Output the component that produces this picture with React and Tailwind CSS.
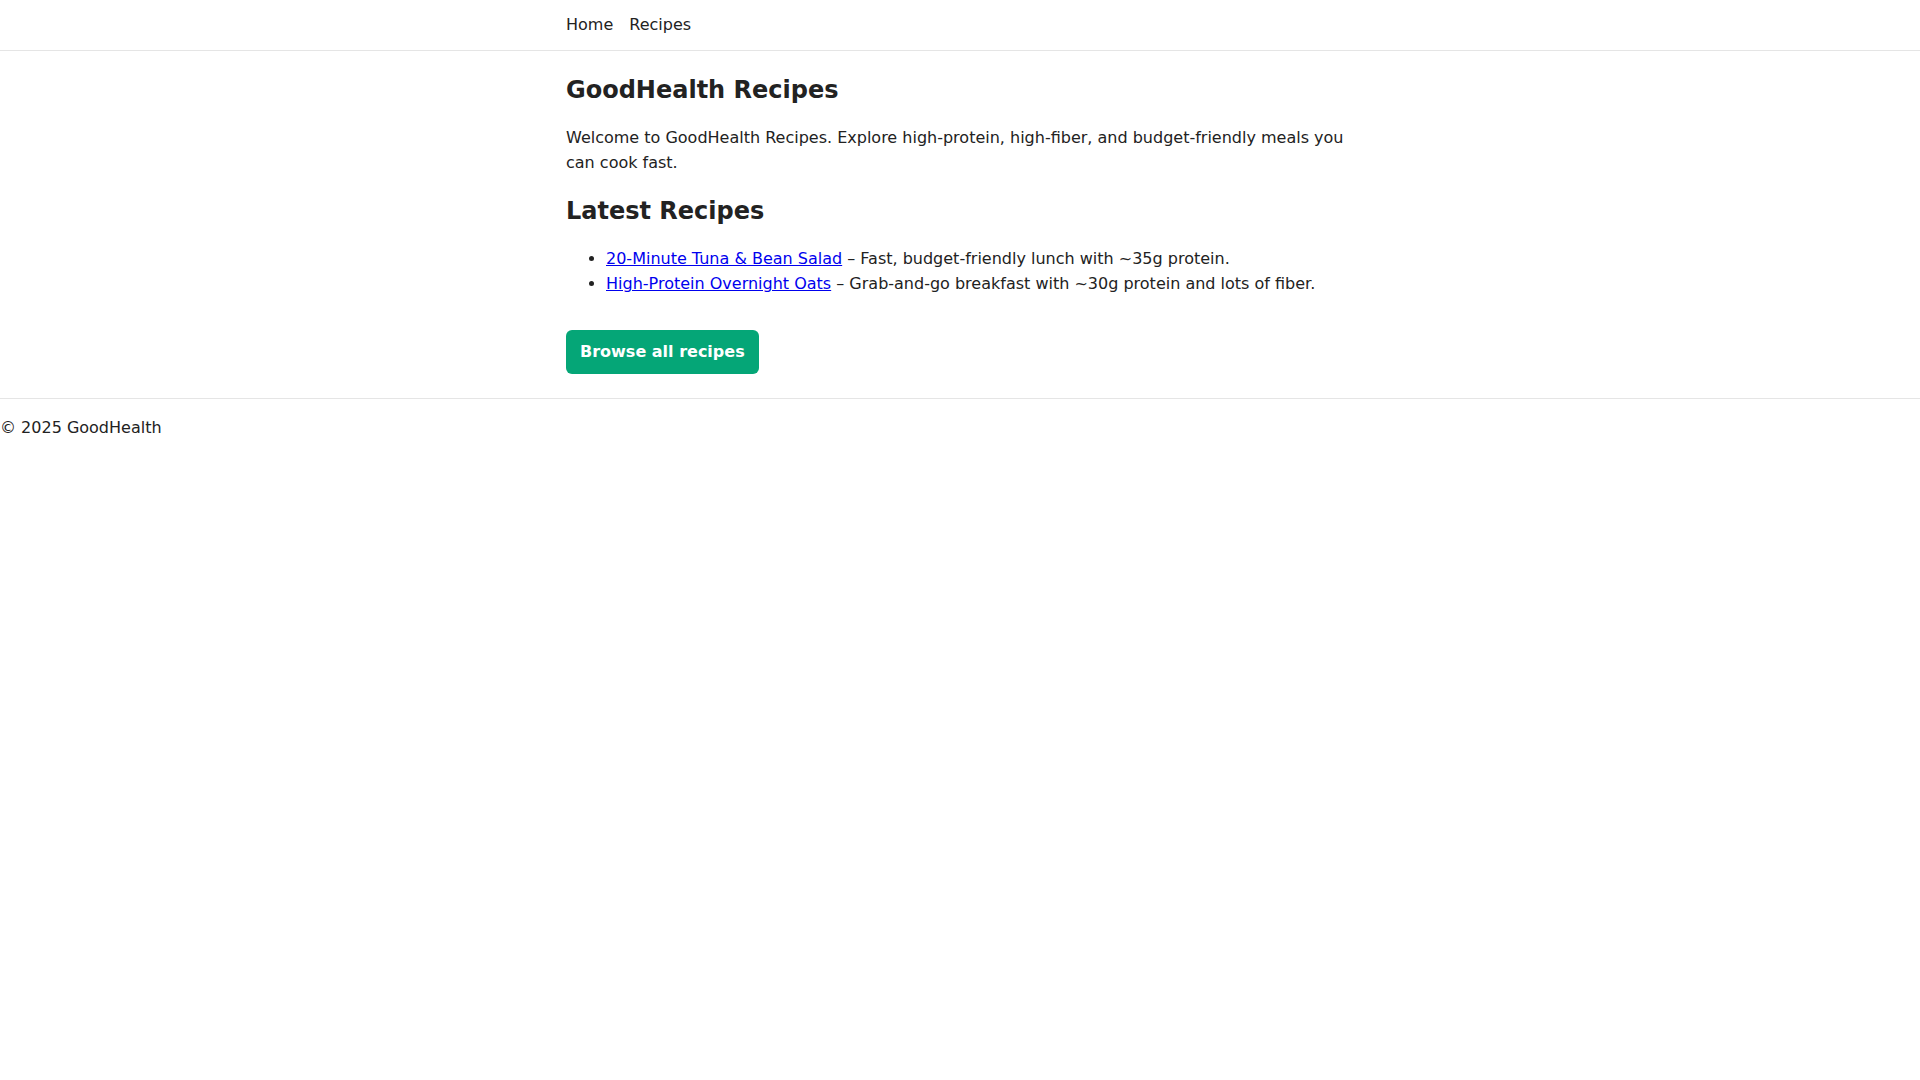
export default function App() {
  return (
    <div className="min-h-screen bg-white text-[#222] text-[16px] leading-[25px]" style={{ fontFamily: '"DejaVu Sans", sans-serif' }}>
      {/* Top nav */}
      <header className="border-b border-[#e5e5e5]">
        <nav className="mx-auto max-w-[788px] pt-[12px] pb-[13px] flex gap-[16px]">
          <a href="#" className="text-[#222]">Home</a>
          <a href="#" className="text-[#222]">Recipes</a>
        </nav>
      </header>

      <main className="mx-auto max-w-[788px] pt-6 pb-6">
        <h1 className="text-[24px] leading-[30px] font-bold mb-[20px]">GoodHealth Recipes</h1>
        <p>
          Welcome to GoodHealth Recipes. Explore high-protein, high-fiber, and budget-friendly meals you can cook fast.
        </p>

        <h2 className="text-[24px] leading-[30px] font-bold mt-[21px] mb-[20px]">Latest Recipes</h2>
        <ul className="list-disc pl-10">
          <li>
            <a href="#" className="text-[#0000ee] underline">20-Minute Tuna &amp; Bean Salad</a> – Fast, budget-friendly lunch with ~35g protein.
          </li>
          <li>
            <a href="#" className="text-[#0000ee] underline">High-Protein Overnight Oats</a> – Grab-and-go breakfast with ~30g protein and lots of fiber.
          </li>
        </ul>

        <div className="mt-[34px]">
          <a href="#" className="inline-block bg-[#05a677] text-white font-bold px-[14px] py-[10px] leading-[24px] rounded-[6px]">
            Browse all recipes
          </a>
        </div>
      </main>

      <footer className="border-t border-[#e5e5e5] pt-4">
        <p>© 2025 GoodHealth</p>
      </footer>
    </div>
  );
}
